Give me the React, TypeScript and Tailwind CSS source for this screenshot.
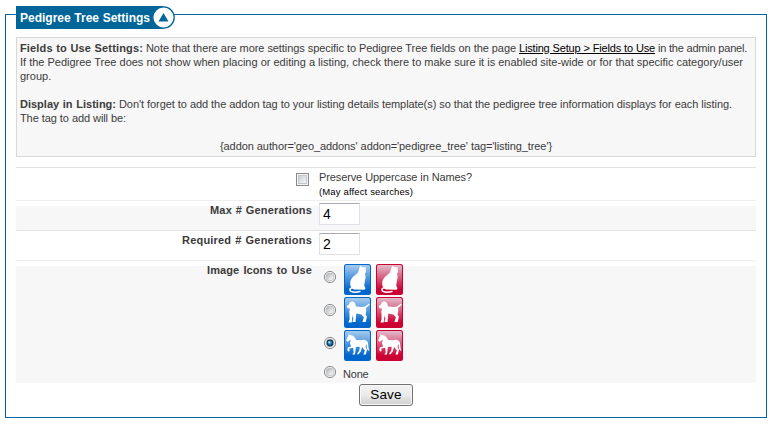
import type { ReactNode } from "react";

type Animal = "cat" | "dog" | "horse";

function Silhouette({ animal }: { animal: Animal }) {
  if (animal === "cat") {
    return (
      <g fill="#fff">
        <path d="M16.5 1.5 L18.2 3.3 L20.1 3.3 L21.7 3.3 L21.6 5.8 C22.6 7.4 21.9 8.7 20.8 9.4 C21.8 11.5 21.8 13.4 21.1 15.8 L20.2 21.5 L21.6 24.6 L20.3 25.8 L10 25.6 C5.6 24 5.4 18 7.5 14.7 C9.3 11.9 12.8 10.8 14.2 8 C15 6 15.4 3.6 16.5 1.5Z" />
        <path d="M8.2 23.8 C4.8 24.6 5.2 27.4 9 28 C11.5 28.4 13.5 28.1 16 27.5" fill="none" stroke="#fff" strokeWidth="1.5" strokeLinecap="round" />
      </g>
    );
  }
  if (animal === "dog") {
    return (
      <path
        fill="#fff"
        d="M2.7 9.1 L5 7.6 C5.5 5 7.3 4 9.3 4.8 C11.3 5.6 11.2 8 12.3 9.6 L17.5 10.1 L20.9 9.5 L24.6 6.9 C25.7 6.3 26 7.4 25.2 8.2 L22 11 C22.8 13.4 21.8 15.6 21.6 17.6 L22.9 19.7 L21.7 25 L18.4 25 L19.9 20.3 L17.3 17.4 L12.3 16.6 L11.5 25 L8.4 25 L9.4 21 L8.6 18.6 L7.7 25.4 L4.3 25.4 L5.6 22.2 L5.5 16.2 C4.7 14.6 6.2 12.6 5.7 11.2 L3.6 11.4 Z"
      />
    );
  }
  return (
    <path
      fill="#fff"
      d="M2.1 10.6 L4 6.4 L4.6 4.3 L6.1 5.1 C9 5 10.8 7.3 12.4 9.9 L17.5 10.3 C20.3 9.3 22.9 10 23.8 12.6 C24.6 15.3 24 18.1 25.5 20.6 C24 20.6 23 19.6 22.9 17.7 L22.4 14 L21.5 16.4 L23 19.8 L21.8 24.4 L19.4 24.4 L20.9 20.4 L18 17.1 L16.8 21.4 L14.6 24.2 L12.8 24.2 L15.3 20.4 L15.8 16.7 L11.9 16.9 L11.3 22.4 L10.9 24.4 L8.3 24.4 L9.7 22.2 L9.2 17.8 L5.4 18.5 L5.5 20.6 L5 21.8 L3.3 20.4 L3.7 17.6 L7.1 16.4 L6 13.3 L6.8 9.4 L3.7 11.8Z"
    />
  );
}

function AnimalTile({ animal, tone }: { animal: Animal; tone: "blue" | "red" }) {
  const id = `${animal}-${tone}`;
  const deep = tone === "blue" ? "#0066cb" : "#cc0033";
  const light = tone === "blue" ? "#a6cbee" : "#e2bccb";
  return (
    <svg width="27" height="31" viewBox="0 0 27 31" className="block">
      <defs>
        <linearGradient id={id} x1="0" y1="0" x2="0" y2="1">
          <stop offset="0" stopColor={light} />
          <stop offset="0.85" stopColor={deep} />
        </linearGradient>
      </defs>
      <rect width="27" height="31" rx="2.5" fill={deep} />
      <rect x="1" y="1" width="25" height="29" rx="1.5" fill={`url(#${id})`} />
      <Silhouette animal={animal} />
    </svg>
  );
}

function Radio({ checked = false }: { checked?: boolean }) {
  return (
    <svg width="13" height="13" viewBox="0 0 13 13" className="block">
      <defs>
        <linearGradient id="radio-fill" x1="0" y1="0" x2="1" y2="1">
          <stop offset="0.15" stopColor="#b9bcc0" />
          <stop offset="0.8" stopColor="#f5f5f5" />
        </linearGradient>
      </defs>
      <circle cx="6" cy="6" r="5.6" fill="#f4f4f4" stroke="#8a8b8c" />
      <circle cx="6" cy="6" r="3.9" fill="url(#radio-fill)" stroke="#bbbdbf" strokeWidth="0.8" />
      {checked && (
        <>
          <circle cx="6" cy="6" r="3.4" fill="#123a5c" />
          <circle cx="5.8" cy="5.8" r="2.1" fill="#2f94c9" />
          <circle cx="5.3" cy="5.2" r="1" fill="#a9e2f7" />
        </>
      )}
    </svg>
  );
}

/* One run of text stretched to a set width */
function Run({ className, children }: { className: string; children: ReactNode }) {
  return (
    <span className={`block shrink-0 whitespace-nowrap [text-align-last:justify] ${className}`}>{children}</span>
  );
}

function Row({ children, className }: { children: ReactNode; className: string }) {
  return <div className={`flex border-t ${className}`}>{children}</div>;
}

function IconChoice({ animal, checked }: { animal: Animal; checked?: boolean }) {
  return (
    <div className="flex h-[33px] items-start">
      <div className="mt-[7px] mr-[7px]">
        <Radio checked={checked} />
      </div>
      <div className="flex gap-[5px]">
        <AnimalTile animal={animal} tone="blue" />
        <AnimalTile animal={animal} tone="red" />
      </div>
    </div>
  );
}

export default function App() {
  return (
    <div className="h-[427px] w-[772px] bg-white pt-[14px] pl-[5px] font-['Liberation_Sans',Arial,sans-serif] text-[11px] leading-[14px] text-[#3b3b3b]">
      <div className="h-[404px] w-[762px] border border-[#006699] pl-[10px]">
        <div className="-mt-[9px] flex h-[23px] items-center">
          <div className="flex h-[23px] w-[148px] items-center bg-[#006699] pl-1 text-xs font-bold text-white">
            <Run className="w-[130px]">Pedigree Tree Settings</Run>
          </div>
          <svg width="23" height="23" viewBox="0 0 23 23" className="-ml-[12px] block">
            <circle cx="11.5" cy="11.5" r="10.7" fill="#fff" stroke="#006699" strokeWidth="1.3" />
            <path d="M11.5 7 L16.5 15.5 H6.5Z" fill="#006699" />
          </svg>
        </div>

        <div className="mt-2 h-[120px] w-[740px] border border-[#d8d8d8] bg-[#f7f7f7] p-[3px]">
          <div className="flex">
            <Run className="mr-[3px] w-[123px] font-bold tracking-[0.15px]">Fields to Use Settings:</Run>
            <Run className="mr-[3px] w-[370px] tracking-[-0.07px]">Note that there are more settings specific to Pedigree Tree fields on the page</Run>
            <Run className="mr-[3px] w-[136px] tracking-[-0.18px] text-black underline underline-offset-1">Listing Setup &gt; Fields to Use</Run>
            <Run className="w-[89px] tracking-[-0.22px]">in the admin panel.</Run>
          </div>
          <Run className="w-[723px] tracking-[-0.01px]">If the Pedigree Tree does not show when placing or editing a listing, check there to make sure it is enabled site-wide or for that specific category/user</Run>
          <div>group.</div>
          <div className="mt-[14px] flex">
            <Run className="mr-[3px] w-[96px] font-bold">Display in Listing:</Run>
            <Run className="w-[613px] tracking-[-0.07px]">Don't forget to add the addon tag to your listing details template(s) so that the pedigree tree information displays for each listing.</Run>
          </div>
          <Run className="w-[106px] tracking-[-0.1px]">The tag to add will be:</Run>
          <div className="mt-[14px] flex justify-center">
            <Run className="w-[332px] tracking-[-0.09px]">{"{addon author='geo_addons' addon='pedigree_tree' tag='listing_tree'}"}</Run>
          </div>
        </div>

        <div className="mt-[10px] w-[740px]">
          <Row className="h-[33px] border-[#e2e2e2]">
            <div className="mt-[5px] ml-[280px] h-[13px] w-[13px] border border-[#8a8b8c] bg-[#f4f4f4] p-px">
              <div className="h-[9px] w-[9px] border border-[#c4c8cb] bg-linear-to-br from-[#cdd1d5] to-[#f5f5f5]" />
            </div>
            <div className="ml-[10px] pt-[2px]">
              <Run className="w-[153px] tracking-[-0.12px]">Preserve Uppercase in Names?</Run>
              <Run className="w-[94px] pt-px text-[9.5px] tracking-[0.12px] text-black">(May affect searches)</Run>
            </div>
          </Row>
          <Row className="h-[30px] border-[#eeeeee]">
            <div className="mt-[5px] flex h-6 w-full bg-[#f7f7f7]">
              <div className="-mt-[3px] ml-[194px] font-bold">
                <Run className="w-[102px] tracking-[0.18px]">Max # Generations</Run>
              </div>
              <div className="-mt-[3px] ml-[7px] h-[22px] w-[41px] rounded-[1px] border border-[#dfe1ea] border-t-[#a9abb2] bg-white pl-[3px] text-sm leading-[21px] text-black">4</div>
            </div>
          </Row>
          <Row className="h-[30px] border-[#e2e2e2]">
            <div className="mt-[2px] ml-[166px] font-bold">
              <Run className="w-[130px] tracking-[0.2px]">Required # Generations</Run>
            </div>
            <div className="mt-[2px] ml-[7px] h-[22px] w-[41px] rounded-[1px] border border-[#dfe1ea] border-t-[#a9abb2] bg-white pl-[3px] text-sm leading-[21px] text-black">2</div>
          </Row>
          <Row className="h-[123px] border-[#eeeeee]">
            <div className="mt-[5px] flex h-[117px] w-full bg-[#f7f7f7]">
              <div className="-mt-[3px] ml-[191px] font-bold">
                <Run className="w-[105px] tracking-[0.08px]">Image Icons to Use</Run>
              </div>
              <div className="-mt-[2px] ml-[12px]">
                <IconChoice animal="cat" />
                <IconChoice animal="dog" />
                <IconChoice animal="horse" checked />
                <div className="mt-[3px] flex">
                  <Radio />
                  <div className="mt-px ml-[6px]">
                    <Run className="w-[25px] tracking-[-0.2px]">None</Run>
                  </div>
                </div>
              </div>
            </div>
          </Row>
        </div>

        <button className="mt-px ml-[343px] flex h-[22px] w-[54px] items-center justify-center rounded-[3px] border border-[#707070] bg-linear-to-b from-[#f2f2f2] from-0% via-[#ebebeb] via-50% to-[#cfcfcf] text-[13.5px] tracking-[0.2px] text-black shadow-[inset_0_0_0_1px_#f8f8f8]">
          Save
        </button>
      </div>
    </div>
  );
}
